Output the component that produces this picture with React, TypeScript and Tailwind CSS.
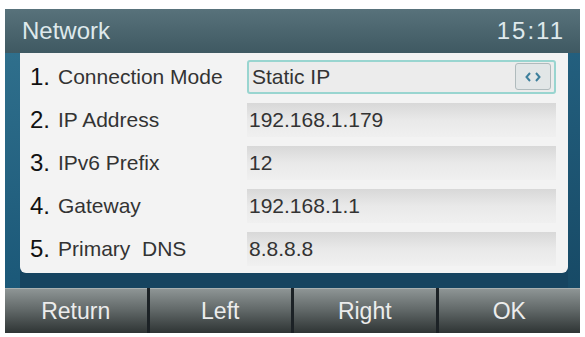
import React from 'react'

const rows = [
  { n: '1.', label: 'Connection Mode', value: 'Static IP', active: true },
  { n: '2.', label: 'IP Address', value: '192.168.1.179' },
  { n: '3.', label: 'IPv6 Prefix', value: '12' },
  { n: '4.', label: 'Gateway', value: '192.168.1.1' },
  { n: '5.', label: 'Primary  DNS', value: '8.8.8.8' },
]

const keys = ['Return', 'Left', 'Right', 'OK']

export default function App() {
  return (
    <div className="w-[585px] h-[337px] bg-white pt-[9px] pl-[5px]" style={{ fontFamily: '"Liberation Sans", Arial, sans-serif' }}>
      <div className="w-[575px] h-[324px] flex flex-col bg-[#164460]">
        {/* header */}
        <div className="h-[44px] flex items-center justify-between pl-[17px] pr-[15px] bg-gradient-to-b from-[#58727b] to-[#3f5962]">
          <span className="text-[24px] text-[#dfe9ec]">Network</span>
          <span className="text-[24px] text-[#dfe9ec] tracking-[2px]">15:11</span>
        </div>

        {/* body */}
        <div className="flex h-[235px]">
          <div className="w-[15px] bg-gradient-to-b from-[#2f6f8c] to-[#1b5878]" />
          <div className="flex-1 flex flex-col">
            <div className="h-[220px] bg-[#f3f3f3] rounded-b-[6px] pt-[2px] pl-[10px] pr-[12px]">
              {rows.map((r) => (
                <div key={r.n} className="h-[43px] flex items-center">
                  <span className="w-[28px] text-[24px] text-[#111]">{r.n}</span>
                  <span className="w-[189px] text-[21px] text-[#333] whitespace-pre">{r.label}</span>
                  <div
                    className={
                      r.active
                        ? 'flex-1 h-[34px] flex items-center justify-between pl-[3px] pr-[3px] border-2 border-[#99d5d0] rounded-[3px] bg-[#ececec]'
                        : 'flex-1 h-[34px] flex items-center pl-[2px] bg-gradient-to-b from-[#d8d8d8] via-[#e9e9e9] to-[#f0f0f0]'
                    }
                  >
                    <span className="text-[21px] text-[#333]">{r.value}</span>
                    {r.active && (
                      <div className="w-[36px] h-[27px] flex items-center justify-center border border-[#b0bbbd] rounded-[3px] bg-[#e2e6e7]">
                        <svg width="16" height="10" viewBox="0 0 16 10" fill="none" stroke="#3d7f9c" strokeWidth="2">
                          <path d="M5 1 L1.5 5 L5 9" />
                          <path d="M11 1 L14.5 5 L11 9" />
                        </svg>
                      </div>
                    )}
                  </div>
                </div>
              ))}
            </div>
          </div>
          <div className="w-[12px] bg-gradient-to-b from-[#235f7e] to-[#174a66]" />
        </div>

        {/* soft keys */}
        <div className="flex-1 grid grid-cols-4 gap-[3px] bg-[#1c2226]">
          {keys.map((k) => (
            <div
              key={k}
              className="flex items-center justify-center bg-gradient-to-b from-[#8e9595] via-[#5f6666] to-[#2f3535] border-t border-[#a9b0b0]"
            >
              <span className="text-[23px] text-[#ececec]">{k}</span>
            </div>
          ))}
        </div>
      </div>
    </div>
  )
}
